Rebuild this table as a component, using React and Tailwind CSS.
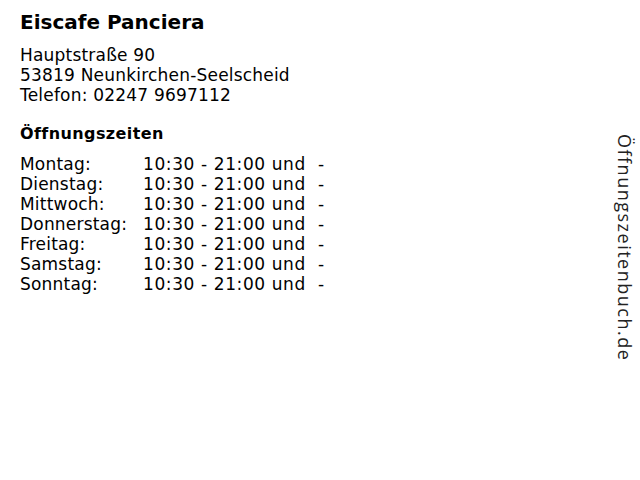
import React from 'react'

const zeiten = [
  ['Montag:', '10:30 - 21:00 und  -'],
  ['Dienstag:', '10:30 - 21:00 und  -'],
  ['Mittwoch:', '10:30 - 21:00 und  -'],
  ['Donnerstag:', '10:30 - 21:00 und  -'],
  ['Freitag:', '10:30 - 21:00 und  -'],
  ['Samstag:', '10:30 - 21:00 und  -'],
  ['Sonntag:', '10:30 - 21:00 und  -'],
]

export default function App() {
  return (
    <div className="w-[640px] h-[480px] bg-white text-black flex font-['DejaVu_Sans',sans-serif]">
      <div className="flex-1 pl-5 pt-[9px]">
        <h1 className="text-[20px] leading-[26px] font-bold">Eiscafe Panciera</h1>
        <div className="mt-[10px] text-[17px] leading-[20px] tracking-[0.2px]">
          <div>Hauptstraße 90</div>
          <div>53819 Neunkirchen-Seelscheid</div>
          <div>Telefon: 02247 9697112</div>
        </div>
        <h2 className="mt-[19px] text-[16px] leading-[20px] font-bold tracking-[0.4px]">Öffnungszeiten</h2>
        <table className="mt-[10px] text-[17px] leading-[20px]">
          <tbody>
            {zeiten.map(([tag, zeit]) => (
              <tr key={tag}>
                <td className="p-0 w-[123px] align-top tracking-[0.2px]">{tag}</td>
                <td className="p-0 whitespace-pre tracking-[0.6px]">{zeit}</td>
              </tr>
            ))}
          </tbody>
        </table>
      </div>
      <div className="w-[34px] pt-[134px] pl-[9px] flex justify-start">
        <div className="[writing-mode:vertical-rl] text-[18px] leading-[20px] tracking-[1.5px] text-[#222] font-['Open_Sans',sans-serif]">
          Öffnungszeitenbuch.de
        </div>
      </div>
    </div>
  )
}
